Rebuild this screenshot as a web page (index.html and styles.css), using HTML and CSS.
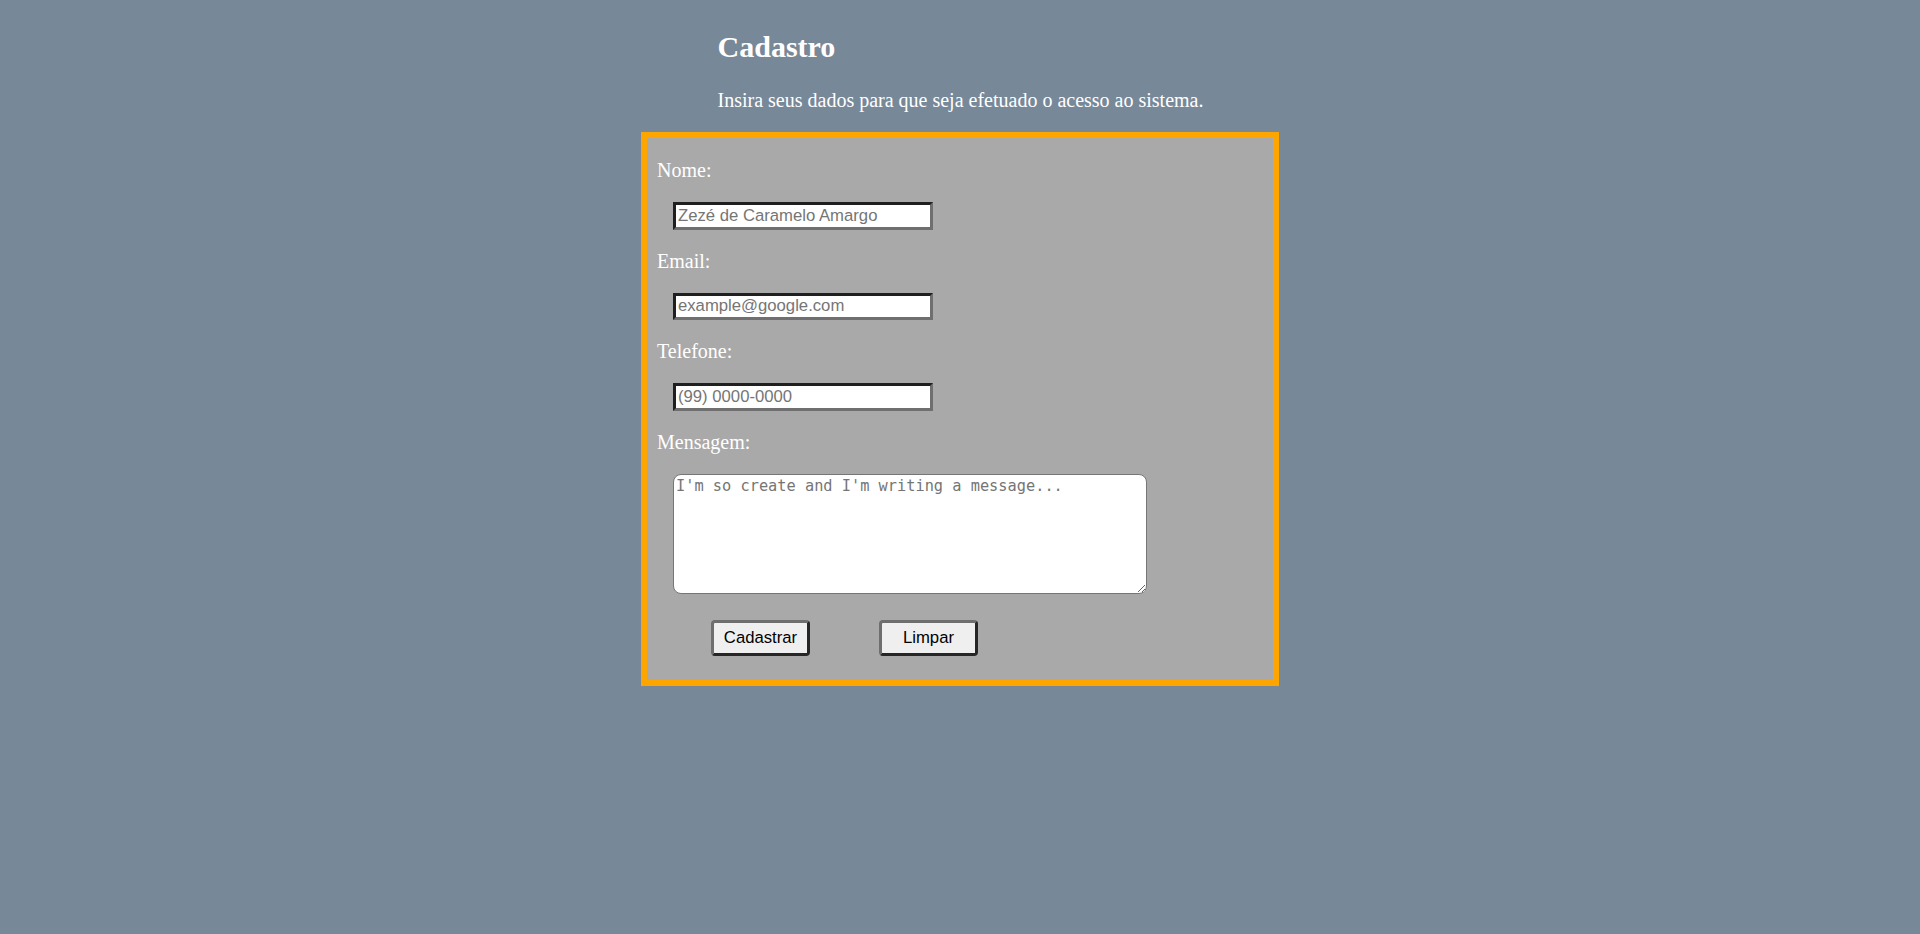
FILE: index.html
```html
<!DOCTYPE html>
<html lang="pt-BR">
<head>
<meta charset="utf-8">
<title>Cadastro</title>
<link rel="stylesheet" href="styles.css">
</head>
<body>
<header class="header">
  <h2 class="title">Cadastro</h2>
  <p class="subtitle">Insira seus dados para que seja efetuado o acesso ao sistema.</p>
</header>
<form class="form-box">
  <label class="label" for="nome">Nome:</label>
  <input class="field" id="nome" type="text" placeholder="Zezé de Caramelo Amargo">
  <label class="label" for="email">Email:</label>
  <input class="field" id="email" type="email" placeholder="example@google.com">
  <label class="label" for="tel">Telefone:</label>
  <input class="field" id="tel" type="tel" placeholder="(99) 0000-0000">
  <label class="label" for="msg">Mensagem:</label>
  <textarea class="message" id="msg" placeholder="I'm so create and I'm writing a message..."></textarea>
  <div class="actions">
    <button class="btn" type="submit">Cadastrar</button>
    <button class="btn" type="reset">Limpar</button>
  </div>
</form>
</body>
</html>
```
FILE: styles.css
```css
html, body {
  margin: 0;
  padding: 0;
}
body {
  background: #778899;
  font-family: "Liberation Serif", "Times New Roman", serif;
  font-size: 20px;
  color: #ffffff;
  min-height: 934px;
}
.header {
  width: fit-content;
  margin: 0 auto;
  padding-top: 30px;
  padding-left: 1px;
}
.title {
  margin: 0;
  font-size: 30px;
  line-height: 34px;
  font-weight: bold;
}
.subtitle {
  margin: 25px 0 20px;
  font-size: 20px;
  line-height: 23px;
}
.form-box {
  box-sizing: border-box;
  margin: 0 auto;
  width: 638px;
  border: 6px solid #ffa500;
  background: #a9a9a9;
  padding: 21px 10px 24px;
  display: flex;
  flex-direction: column;
  align-items: flex-start;
}
.label {
  font-size: 20px;
  line-height: 23px;
  color: #ffffff;
}
.field {
  margin: 20px 0 20px 16px;
  box-sizing: border-box;
  width: 260px;
  height: 27.5px;
  border-width: 3px;
  border-style: solid;
  border-color: #1f1f1f #6f6f6f #6f6f6f #1f1f1f;
  background: #ffffff;
  padding: 1px 2px;
  font-family: "Liberation Sans", Arial, sans-serif;
  font-size: 16.7px;
  color: #000;
  outline: none;
}
.field::placeholder {
  color: #757575;
}
.message {
  margin: 20px 0 0 16px;
  box-sizing: border-box;
  width: 474px;
  height: 120px;
  border: 1px solid #767676;
  border-radius: 8px;
  background: #ffffff;
  padding: 2px 2px;
  font-family: "DejaVu Sans Mono", "Liberation Mono", monospace;
  font-size: 15.3px;
  color: #000;
  outline: none;
}
.message::placeholder {
  color: #757575;
}
.actions {
  display: flex;
  gap: 69px;
  margin-top: 26.5px;
  padding-left: 54px;
}
.btn {
  box-sizing: border-box;
  width: 99px;
  height: 36px;
  border-width: 3px;
  border-style: solid;
  border-color: #6e6e6e #262626 #262626 #6e6e6e;
  border-radius: 4px;
  background: #efefef;
  font-family: "Liberation Sans", Arial, sans-serif;
  font-size: 16.7px;
  color: #000;
  padding: 0;
  cursor: pointer;
}
```
